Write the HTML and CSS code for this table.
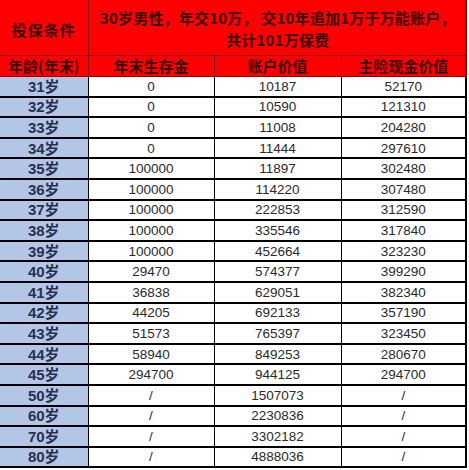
FILE: index.html
```html
<!DOCTYPE html>
<html lang="zh">
<head>
<meta charset="utf-8">
<link rel="stylesheet" href="styles.css">
</head>
<body>
<table class="sheet">
  <colgroup>
    <col class="c-age"><col class="c-a"><col class="c-b"><col class="c-c">
  </colgroup>
  <thead>
    <tr class="h1">
      <th class="lbl">投保条件</th>
      <th colspan="3" class="cond">30岁男性，年交10万， 交10年追加1万于万能账户，<br>共计101万保费</th>
    </tr>
    <tr class="h2">
      <th>年龄(年末)</th>
      <th>年末生存金</th>
      <th>账户价值</th>
      <th>主险现金价值</th>
    </tr>
  </thead>
  <tbody>
    <tr><th>31岁</th><td>0</td><td>10187</td><td>52170</td></tr>
    <tr><th>32岁</th><td>0</td><td>10590</td><td>121310</td></tr>
    <tr><th>33岁</th><td>0</td><td>11008</td><td>204280</td></tr>
    <tr><th>34岁</th><td>0</td><td>11444</td><td>297610</td></tr>
    <tr><th>35岁</th><td>100000</td><td>11897</td><td>302480</td></tr>
    <tr><th>36岁</th><td>100000</td><td>114220</td><td>307480</td></tr>
    <tr><th>37岁</th><td>100000</td><td>222853</td><td>312590</td></tr>
    <tr><th>38岁</th><td>100000</td><td>335546</td><td>317840</td></tr>
    <tr><th>39岁</th><td>100000</td><td>452664</td><td>323230</td></tr>
    <tr><th>40岁</th><td>29470</td><td>574377</td><td>399290</td></tr>
    <tr><th>41岁</th><td>36838</td><td>629051</td><td>382340</td></tr>
    <tr><th>42岁</th><td>44205</td><td>692133</td><td>357190</td></tr>
    <tr><th>43岁</th><td>51573</td><td>765397</td><td>323450</td></tr>
    <tr><th>44岁</th><td>58940</td><td>849253</td><td>280670</td></tr>
    <tr><th>45岁</th><td>294700</td><td>944125</td><td>294700</td></tr>
    <tr><th>50岁</th><td>/</td><td>1507073</td><td>/</td></tr>
    <tr><th>60岁</th><td>/</td><td>2230836</td><td>/</td></tr>
    <tr><th>70岁</th><td>/</td><td>3302182</td><td>/</td></tr>
    <tr><th>80岁</th><td>/</td><td>4888036</td><td>/</td></tr>
  </tbody>
</table>
</body>
</html>
```
FILE: styles.css
```css
html, body {
  margin: 0;
  padding: 0;
  background: #ffffff;
}
.sheet {
  border-collapse: collapse;
  table-layout: fixed;
  width: 466px;
  font-family: "Liberation Sans", "Noto Sans CJK SC", sans-serif;
}
.c-age { width: 88px; }
.c-a { width: 126px; }
.c-b { width: 127px; }
.c-c { width: 125px; }

.sheet th, .sheet td {
  padding: 0;
  text-align: center;
  vertical-align: middle;
  white-space: nowrap;
  overflow: hidden;
}
.sheet thead th {
  background: #ff0000;
  color: #3a0202;
  font-family: "Noto Sans CJK SC", sans-serif;
  font-weight: 700;
  font-size: 15px;
  border: 1px solid #8a0a0a;
  border-top: none;
}
.sheet thead th:first-child { border-left: none; }
.h1 { height: 55px; }
.h1 .lbl { letter-spacing: 1px; padding-top: 4px; }
.h1 .cond {
  line-height: 22px;
  font-weight: 700;
  padding-top: 3px;
  padding-left: 2px;
  letter-spacing: 0.2px;
}
.h2 { height: 21px; }
.h2 th { line-height: 20px; border-bottom: 2px solid #e00000; }

.sheet tbody tr { height: 20.6px; }
.sheet tbody th {
  background: #b4c6e7;
  color: #28304f;
  font-family: "Liberation Sans", "Noto Sans CJK SC", sans-serif;
  font-weight: 700;
  font-size: 15px;
  line-height: 17px;
  border: 1px solid #000;
  border-left: none;
  border-top-width: 2px;
}
.sheet tbody td {
  background: #ffffff;
  color: #2a2a2a;
  font-size: 13.5px;
  line-height: 17px;
  border: 1px solid #000;
  border-top-width: 2px;
}
.sheet tbody tr:first-child th,
.sheet tbody tr:first-child td { border-top: none; }
.sheet tbody tr:last-child th,
.sheet tbody tr:last-child td { border-bottom-width: 2px; }
.sheet tr > :last-child { border-right-width: 2px; }
.sheet thead tr > :last-child { border-right: 2px solid #8a0a0a; }
```
